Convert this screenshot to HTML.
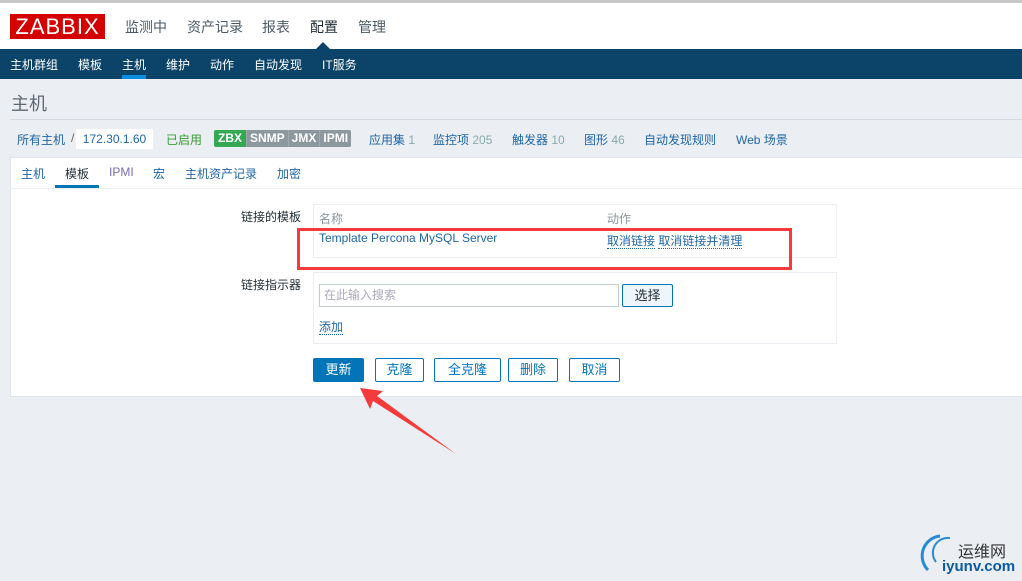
<!DOCTYPE html>
<html><head><meta charset="utf-8"><style>
*{margin:0;padding:0;box-sizing:border-box}
body{width:1022px;height:581px;overflow:hidden;background:#ebeef2;font-family:"Liberation Sans","Noto Sans CJK SC",sans-serif;font-size:12px;position:relative;color:#1f2c33}
.a{position:absolute;white-space:nowrap}
.lk{color:#1f65a6}
.btn{position:absolute;top:358px;height:24px;border:1px solid #0275b8;border-radius:2px;background:#fff;color:#0275b8;font-size:13px;text-align:center;line-height:22px}
.u{border-bottom:1px dotted #1f65a6}
.n{top:17px;font-size:14px;color:#4a5a66}
.s{top:56px;color:#fff;font-size:12px}
</style></head><body>
<div class="a" style="left:0;top:0;width:1022px;height:3px;background:#c8c8c8"></div>
<div class="a" style="left:0;top:3px;width:1022px;height:46px;background:#fff"></div>
<div class="a" style="left:10px;top:14px;width:95px;height:25px;background:#d40000;color:#fff;font-size:22px;line-height:25px;text-align:center;letter-spacing:1px">ZABBIX</div>
<div class="a n" style="left:125px">监测中</div>
<div class="a n" style="left:187px">资产记录</div>
<div class="a n" style="left:262px">报表</div>
<div class="a n" style="left:310px;color:#1f2c33">配置</div>
<div class="a n" style="left:358px">管理</div>
<div class="a" style="left:316px;top:42px;width:0;height:0;border-left:7px solid transparent;border-right:7px solid transparent;border-bottom:7px solid #0b4468"></div>
<div class="a" style="left:0;top:49px;width:1022px;height:30px;background:#0b4468"></div>
<div class="a s" style="left:10px">主机群组</div>
<div class="a s" style="left:78px">模板</div>
<div class="a s" style="left:122px">主机</div>
<div class="a" style="left:122px;top:75px;width:24px;height:4px;background:#0a8ce0"></div>
<div class="a s" style="left:166px">维护</div>
<div class="a s" style="left:210px">动作</div>
<div class="a s" style="left:254px">自动发现</div>
<div class="a s" style="left:322px">IT服务</div>
<div class="a" style="left:11px;top:90px;font-size:18px;color:#5c6870">主机</div>
<div class="a" style="left:10px;top:119px;width:1012px;height:1px;background:#d5dbe0"></div>
<div class="a lk" style="left:17px;top:131px">所有主机</div>
<div class="a" style="left:71px;top:131px;color:#666">/</div>
<div class="a lk" style="left:76px;top:129px;width:77px;height:20px;background:#fff;line-height:20px;text-align:center">172.30.1.60</div>
<div class="a" style="left:166px;top:131px;color:#3a9a3a">已启用</div>
<div class="a" style="left:214px;top:130px;height:17px;line-height:17px;font-weight:bold;font-size:12px;color:#fff;display:flex;border-radius:2px;overflow:hidden">
<span style="background:#34a853;padding:0 4px">ZBX</span><span style="background:#8c979e;padding:0 3px;border-left:1px solid #a0a9ae">SNMP</span><span style="background:#8c979e;padding:0 3px;border-left:1px solid #a0a9ae">JMX</span><span style="background:#8c979e;padding:0 3px;border-left:1px solid #a0a9ae">IPMI</span></div>
<div class="a lk" style="left:369px;top:131px">应用集 <span style="color:#8aa">1</span></div>
<div class="a lk" style="left:433px;top:131px">监控项 <span style="color:#8aa">205</span></div>
<div class="a lk" style="left:512px;top:131px">触发器 <span style="color:#8aa">10</span></div>
<div class="a lk" style="left:584px;top:131px">图形 <span style="color:#8aa">46</span></div>
<div class="a lk" style="left:644px;top:131px">自动发现规则</div>
<div class="a lk" style="left:736px;top:131px">Web 场景</div>
<div class="a" style="left:10px;top:157px;width:1012px;height:240px;background:#fff;border:1px solid #dfe4e7;border-right:none"></div>
<div class="a lk" style="left:21px;top:165px">主机</div>
<div class="a" style="left:65px;top:165px">模板</div>
<div class="a" style="left:55px;top:185px;width:44px;height:3px;background:#0275b8"></div>
<div class="a" style="left:109px;top:165px;color:#7a6ab5">IPMI</div>
<div class="a lk" style="left:153px;top:165px">宏</div>
<div class="a lk" style="left:185px;top:165px">主机资产记录</div>
<div class="a lk" style="left:277px;top:165px">加密</div>
<div class="a" style="left:11px;top:188px;width:1011px;height:1px;background:#ebeef2"></div>
<div class="a" style="left:241px;top:208px">链接的模板</div>
<div class="a" style="left:313px;top:204px;width:524px;height:54px;border:1px solid #ebeef2"></div>
<div class="a" style="left:319px;top:210px;color:#8a959b">名称</div>
<div class="a" style="left:607px;top:210px;color:#8a959b">动作</div>
<div class="a lk" style="left:319px;top:231px">Template Percona MySQL Server</div>
<div class="a lk" style="left:607px;top:232px"><span class="u">取消链接</span> <span class="u">取消链接并清理</span></div>
<div class="a" style="left:297px;top:228px;width:495px;height:42px;border:3px solid #f43a3a"></div>
<div class="a" style="left:241px;top:276px">链接指示器</div>
<div class="a" style="left:313px;top:272px;width:524px;height:72px;border:1px solid #ebeef2"></div>
<div class="a" style="left:319px;top:284px;width:300px;height:23px;border:1px solid #c5ccd0;color:#aab;line-height:21px;padding-left:4px">在此输入搜索</div>
<div class="a" style="left:622px;top:284px;width:51px;height:23px;border:1px solid #0275b8;border-radius:2px;background:#eef5fb;text-align:center;line-height:21px;font-size:13px">选择</div>
<div class="a lk" style="left:319px;top:318px"><span class="u">添加</span></div>
<div class="btn" style="left:313px;width:51px;background:#0275b8;color:#fff">更新</div>
<div class="btn" style="left:375px;width:49px">克隆</div>
<div class="btn" style="left:434px;width:67px">全克隆</div>
<div class="btn" style="left:508px;width:50px">删除</div>
<div class="btn" style="left:569px;width:51px">取消</div>
<svg class="a" style="left:0;top:0" width="1022" height="581"><polygon points="360,388 383,391 377,396 456,454 373,401 370,409" fill="#f43a3a"/>
<path d="M940 536 A20 20 0 0 0 928 570" stroke="#2a8ad0" stroke-width="3" fill="none"/><path d="M950 538 A15 15 0 0 0 936 562" stroke="#2a8ad0" stroke-width="2" fill="none"/></svg>
<div class="a" style="left:958px;top:538px;font-size:16px;color:#333">运维网</div>
<div class="a" style="left:942px;top:558px;font-size:15px;font-weight:bold;color:#0b5aa0">iyunv.com</div>
</body></html>
